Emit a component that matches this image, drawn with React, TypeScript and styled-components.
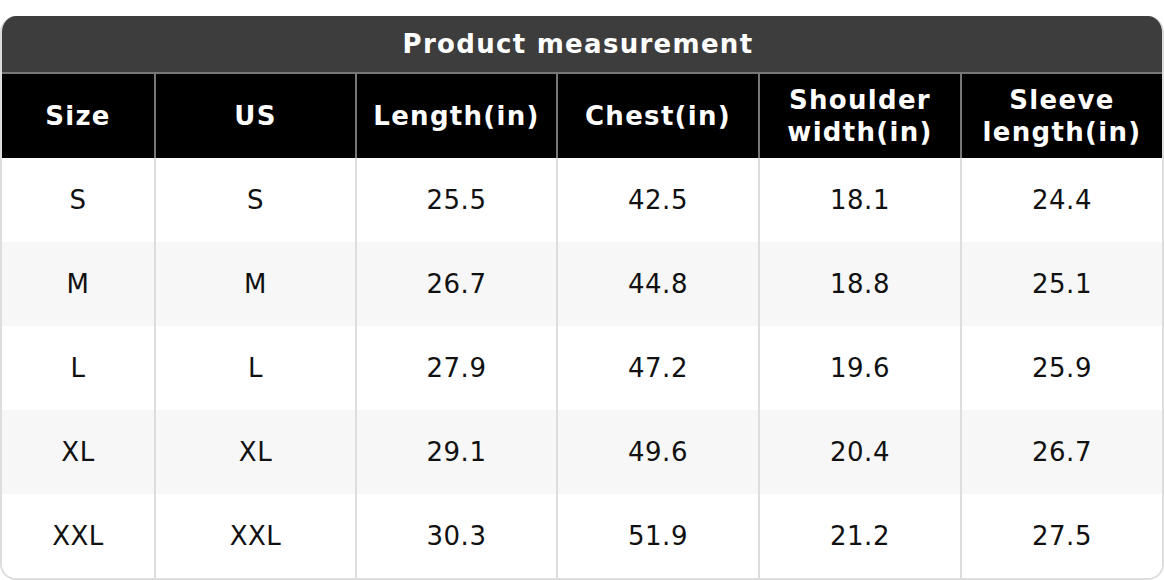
import React from "react";
import styled, { createGlobalStyle } from "styled-components";

const Global = createGlobalStyle`
  html, body { margin: 0; padding: 0; background: #ffffff; }
  body { font-family: "DejaVu Sans", "Liberation Sans", sans-serif; }
`;

const Page = styled.div`
  padding-top: 16px;
  width: 1164px;
`;

const Card = styled.div`
  border-radius: 16px;
  overflow: hidden;
  border: 2px solid #dddddd;
  border-top: none;
  box-sizing: border-box;
  width: 1164px;
  background: #ffffff;
`;

const Title = styled.div`
  background: #3d3d3d;
  color: #ffffff;
  font-weight: bold;
  font-size: 26px;
  letter-spacing: 0.05em;
  height: 56px;
  padding-right: 8px;
  display: flex;
  align-items: center;
  justify-content: center;
  border-bottom: 2px solid #777777;
  margin: 0 -2px;
`;

const Table = styled.table`
  width: 100%;
  border-collapse: collapse;
  table-layout: fixed;
`;

const HeadCell = styled.th`
  background: #000000;
  color: #ffffff;
  font-weight: bold;
  font-size: 26px;
  letter-spacing: 0.05em;
  line-height: 32px;
  height: 84px;
  padding: 0 4px;
  text-align: center;
  border-left: 2px solid #777777;
  &:first-child { border-left: none; }
`;

const Row = styled.tr<{ $alt: boolean }>`
  background: ${(p) => (p.$alt ? "#f7f7f7" : "#ffffff")};
`;

const Cell = styled.td`
  height: 84px;
  padding: 0;
  font-size: 26px;
  letter-spacing: 0.02em;
  color: #111111;
  text-align: center;
  border-left: 2px solid #dddddd;
  &:first-child { border-left: none; }
`;

const widths = [153, 201, 201, 202, 202, 201];
const headers = ["Size", "US", "Length(in)", "Chest(in)", "Shoulder width(in)", "Sleeve length(in)"];
const headerLines: React.ReactNode[] = [
  "Size",
  "US",
  "Length(in)",
  "Chest(in)",
  <>Shoulder<br />width(in)</>,
  <>Sleeve<br />length(in)</>,
];
const rows = [
  ["S", "S", "25.5", "42.5", "18.1", "24.4"],
  ["M", "M", "26.7", "44.8", "18.8", "25.1"],
  ["L", "L", "27.9", "47.2", "19.6", "25.9"],
  ["XL", "XL", "29.1", "49.6", "20.4", "26.7"],
  ["XXL", "XXL", "30.3", "51.9", "21.2", "27.5"],
];

export default function App() {
  return (
    <Page>
      <Global />
      <Card>
        <Title>Product measurement</Title>
        <Table>
          <colgroup>
            {widths.map((w, i) => (
              <col key={i} style={{ width: w }} />
            ))}
          </colgroup>
          <thead>
            <tr>
              {headerLines.map((h, i) => (
                <HeadCell key={headers[i]}>{h}</HeadCell>
              ))}
            </tr>
          </thead>
          <tbody>
            {rows.map((r, i) => (
              <Row key={i} $alt={i % 2 === 1}>
                {r.map((c, j) => (
                  <Cell key={j}>{c}</Cell>
                ))}
              </Row>
            ))}
          </tbody>
        </Table>
      </Card>
    </Page>
  );
}
